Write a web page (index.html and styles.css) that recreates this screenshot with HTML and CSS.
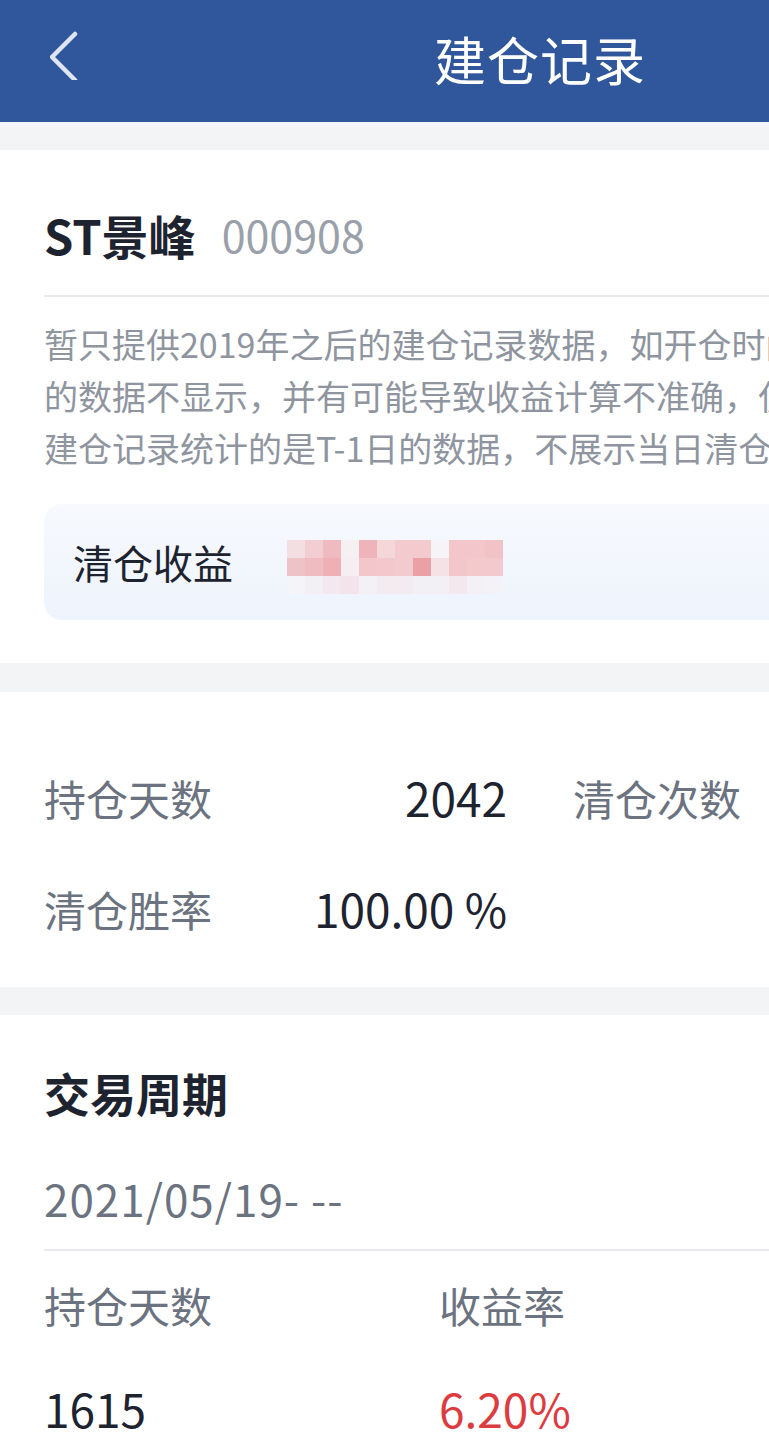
FILE: index.html
```html
<!DOCTYPE html>
<html lang="zh-CN">
<head>
<meta charset="utf-8">
<title>建仓记录</title>
<link rel="stylesheet" href="styles.css">
</head>
<body>
<div class="page">
  <header class="topbar">
    <span class="back" aria-label="返回">
      <svg width="40" height="60" viewBox="0 0 40 60"><polyline points="25,14 2,37 25,60" fill="none" stroke="#dfe6f3" stroke-width="4.5" stroke-linecap="round" stroke-linejoin="round"/></svg>
    </span>
    <h1 class="title">建仓记录</h1>
  </header>

  <section class="card card-stock">
    <div class="stock">
      <span class="stock-name">ST景峰</span>
      <span class="stock-code">000908</span>
    </div>
    <div class="divider"></div>
    <p class="notice">
      <span class="line">暂只提供2019年之后的建仓记录数据，如开仓时间在2019年之前，则之前</span>
      <span class="line">的数据不显示，并有可能导致收益计算不准确，仅供参考。</span>
      <span class="line">建仓记录统计的是T-1日的数据，不展示当日清仓记录。</span>
    </p>
    <div class="profit">
      <span class="profit-label">清仓收益</span>
      <span class="mosaic">
        <i></i><i></i><i></i><i></i><i></i><i></i><i></i><i></i><i></i><i></i><i></i><i></i>
        <i></i><i></i><i></i><i></i><i></i><i></i><i></i><i></i><i></i><i></i><i></i><i></i>
        <i></i><i></i><i></i><i></i><i></i><i></i><i></i><i></i><i></i><i></i><i></i><i></i>
      </span>
    </div>
  </section>

  <section class="card card-stats">
    <div class="stats">
      <div class="stat"><span class="stat-label">持仓天数</span><span class="stat-value">2042</span></div>
      <div class="stat"><span class="stat-label">清仓次数</span><span class="stat-value">1</span></div>
      <div class="stat"><span class="stat-label">清仓胜率</span><span class="stat-value">100.00 %</span></div>
    </div>
  </section>

  <section class="card card-cycle">
    <h2 class="cycle-title">交易周期</h2>
    <div class="cycle-date">2021/05/19- --</div>
    <div class="divider divider-cycle"></div>
    <div class="cycle-grid">
      <span class="cycle-label">持仓天数</span>
      <span class="cycle-label">收益率</span>
      <span class="cycle-label">收益</span>
      <span class="cycle-value">1615</span>
      <span class="cycle-value up">6.20%</span>
      <span class="cycle-value up">--</span>
    </div>
  </section>
</div>
</body>
</html>
```

FILE: styles.css
```css
html, body {
  margin: 0;
  padding: 0;
  overflow: hidden;
  background: #f3f4f6;
}

body {
  font-family: "Noto Sans CJK SC", "Noto Sans", sans-serif;
  color: #1e2330;
}

.page {
  width: 1080px;
}

.topbar {
  height: 122px;
  background: #30579c;
  position: relative;
  display: flex;
  align-items: center;
  justify-content: center;
}

.back {
  position: absolute;
  left: 50px;
  top: 20px;
  width: 40px;
  height: 70px;
}

.title {
  margin: 0 0 4px;
  font-size: 52px;
  font-weight: 400;
  color: #ffffff;
  line-height: 60px;
  letter-spacing: 1px;
}

.card {
  background: #ffffff;
  margin-top: 28px;
  padding: 0 44px;
}

.card-stock {
  padding-top: 54px;
  padding-bottom: 43px;
}

.stock {
  display: flex;
  align-items: center;
  height: 60px;
  gap: 26px;
}

.stock-name {
  font-size: 47px;
  font-weight: 700;
  color: #1e2330;
}

.stock-code {
  font-size: 43px;
  color: #9aa0aa;
}

.divider {
  height: 2px;
  background: #e8e9ec;
  margin-right: -44px;
}

.stock + .divider {
  margin-top: 31px;
}

.notice {
  margin: 21px 0 0;
  font-size: 34px;
  line-height: 52px;
  color: #8f959f;
}

.notice .line {
  display: block;
  white-space: nowrap;
}

.profit {
  margin-top: 30px;
  height: 116px;
  border-radius: 18px;
  background: linear-gradient(180deg, #f7f9fd 0%, #eef4fd 100%);
  display: flex;
  align-items: center;
  padding-left: 29px;
}

.profit-label {
  font-size: 40px;
  color: #1e2330;
  width: 214px;
}

.mosaic {
  display: grid;
  grid-template-columns: repeat(12, 18px);
  grid-template-rows: repeat(3, 18px);
  margin-top: 9px;
}

.mosaic i { display: block; }
.mosaic i:nth-child(1) { background: #f3dfe2; }
.mosaic i:nth-child(2) { background: #f2cdd1; }
.mosaic i:nth-child(3) { background: #efbbc0; }
.mosaic i:nth-child(4) { background: #f7f0f3; }
.mosaic i:nth-child(5) { background: #efb4b9; }
.mosaic i:nth-child(6) { background: #f5d6d9; }
.mosaic i:nth-child(7) { background: #f3cbce; }
.mosaic i:nth-child(8) { background: #f3cbce; }
.mosaic i:nth-child(9) { background: #f7f4f7; }
.mosaic i:nth-child(10) { background: #f2c6ca; }
.mosaic i:nth-child(11) { background: #f2c6ca; }
.mosaic i:nth-child(12) { background: #f1c2c6; }
.mosaic i:nth-child(13) { background: #eec3c7; }
.mosaic i:nth-child(14) { background: #efbdc1; }
.mosaic i:nth-child(15) { background: #eeb0b5; }
.mosaic i:nth-child(16) { background: #f5eef2; }
.mosaic i:nth-child(17) { background: #f2c6ca; }
.mosaic i:nth-child(18) { background: #f3c8cc; }
.mosaic i:nth-child(19) { background: #f2cbce; }
.mosaic i:nth-child(20) { background: #eba0a5; }
.mosaic i:nth-child(21) { background: #f5e2e6; }
.mosaic i:nth-child(22) { background: #f2c6ca; }
.mosaic i:nth-child(23) { background: #f3c9cc; }
.mosaic i:nth-child(24) { background: #f2c9cc; }
.mosaic i:nth-child(25) { background: #f5f4f8; }
.mosaic i:nth-child(26) { background: #f2f0f5; }
.mosaic i:nth-child(27) { background: #f2e8ee; }
.mosaic i:nth-child(28) { background: #f2e4ea; }
.mosaic i:nth-child(29) { background: #f3f1f6; }
.mosaic i:nth-child(30) { background: #f3ebf0; }
.mosaic i:nth-child(31) { background: #f3ebf0; }
.mosaic i:nth-child(32) { background: #f3f0f5; }
.mosaic i:nth-child(33) { background: #f3f0f5; }
.mosaic i:nth-child(34) { background: #f3e8ed; }
.mosaic i:nth-child(35) { background: #f3f1f6; }
.mosaic i:nth-child(36) { background: #f3f2f6; }

.card-stats {
  margin-top: 29px;
  padding-top: 75px;
  padding-bottom: 49px;
}

.stats {
  display: grid;
  grid-template-columns: 463px 463px;
  column-gap: 66px;
  row-gap: 51px;
}

.stat {
  display: flex;
  justify-content: space-between;
  align-items: center;
  height: 60px;
}

.stat-label {
  font-size: 42px;
  color: #6c7380;
}

.stat-value {
  font-size: 46px;
  color: #1e2330;
}

.card-cycle {
  padding-top: 47px;
  padding-bottom: 40px;
}

.cycle-title {
  margin: 0;
  font-size: 46px;
  font-weight: 700;
  line-height: 60px;
  color: #1e2330;
}

.cycle-date {
  margin-top: 46px;
  font-size: 44px;
  line-height: 60px;
  letter-spacing: 1px;
  color: #6c7380;
}

.divider-cycle {
  margin-top: 21px;
}

.cycle-grid {
  margin-top: 24px;
  display: grid;
  grid-template-columns: 395px 395px 200px;
  grid-template-rows: 60px 60px;
  row-gap: 43px;
}

.cycle-label {
  font-size: 42px;
  line-height: 60px;
  color: #6c7380;
}

.cycle-value {
  font-size: 46px;
  line-height: 60px;
  color: #1e2330;
}

.cycle-value.up {
  color: #dc3c3f;
}
```
